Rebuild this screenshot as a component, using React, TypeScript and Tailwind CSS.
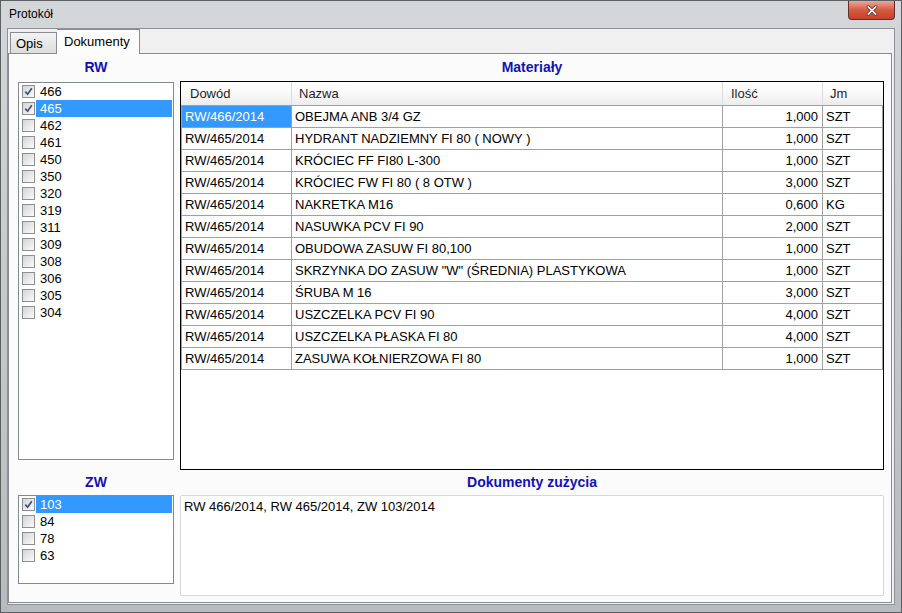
import React from 'react';

const rwItems = ['466', '465', '462', '461', '450', '350', '320', '319', '311', '309', '308', '306', '305', '304'];
const zwItems = ['103', '84', '78', '63'];

const rows = [
  ['RW/466/2014', 'OBEJMA ANB 3/4 GZ', '1,000', 'SZT'],
  ['RW/465/2014', 'HYDRANT NADZIEMNY FI 80 ( NOWY )', '1,000', 'SZT'],
  ['RW/465/2014', 'KRÓCIEC FF FI80 L-300', '1,000', 'SZT'],
  ['RW/465/2014', 'KRÓCIEC FW FI 80 ( 8 OTW )', '3,000', 'SZT'],
  ['RW/465/2014', 'NAKRETKA M16', '0,600', 'KG'],
  ['RW/465/2014', 'NASUWKA PCV FI 90', '2,000', 'SZT'],
  ['RW/465/2014', 'OBUDOWA ZASUW FI 80,100', '1,000', 'SZT'],
  ['RW/465/2014', 'SKRZYNKA DO ZASUW "W" (ŚREDNIA) PLASTYKOWA', '1,000', 'SZT'],
  ['RW/465/2014', 'ŚRUBA M 16', '3,000', 'SZT'],
  ['RW/465/2014', 'USZCZELKA PCV FI 90', '4,000', 'SZT'],
  ['RW/465/2014', 'USZCZELKA PŁASKA FI 80', '4,000', 'SZT'],
  ['RW/465/2014', 'ZASUWA KOŁNIERZOWA FI 80', '1,000', 'SZT'],
];

const CheckBox = ({ checked }: { checked: boolean }) => (
  <span className="flex h-[13px] w-[13px] shrink-0 items-center justify-center border border-[#8f8f8f] bg-[#f4f4f4]">
    <span className="flex h-[11px] w-[11px] items-center justify-center bg-gradient-to-br from-[#d4d4d4] to-[#fbfbfb]">
      {checked && (
        <svg viewBox="0 0 9 9" className="h-[9px] w-[9px]" aria-hidden="true">
          <path d="M1.3 4.6 L3.6 7.2 L7.8 1.2" fill="none" stroke="#3d4f7e" strokeWidth="1.7" />
        </svg>
      )}
    </span>
  </span>
);

const CheckList = ({ items, checked, selected, height }: { items: string[]; checked: string[]; selected: string; height: string }) => (
  <div className={`${height} border border-[#828790] bg-white`}>
    {items.map((it) => (
      <div key={it} className="flex h-[17px] items-center pl-[3px] pr-[1px]">
        <CheckBox checked={checked.includes(it)} />
        <span
          className={`ml-[1px] flex h-[17px] flex-1 items-center pl-[4px] ${
            it === selected ? 'bg-[#3399ff] text-white' : 'text-black'
          }`}
        >
          {it}
        </span>
      </div>
    ))}
  </div>
);

const SectionLabel = ({ children, className }: { children: React.ReactNode; className?: string }) => (
  <div className={`flex items-center justify-center text-[14px] font-bold text-[#1212b2] ${className || ''}`}>
    {children}
  </div>
);

export default function App() {
  return (
    <div className="flex h-[613px] w-[902px] flex-col overflow-hidden border border-[#5c5f63] bg-gradient-to-b from-[#d4d7da] via-[#c6c9cc] to-[#b8bbbe] font-['Liberation_Sans',Arial,sans-serif] text-[13px] text-black">
      {/* title bar */}
      <div className="flex h-[27px] shrink-0 items-start justify-between">
        <div className="pl-[8px] pt-[6px] text-[12px] leading-[15px] text-black">Protokół</div>
        <div className="mr-[6px] flex h-[19px] w-[47px] items-center justify-center rounded-b-[4px] border border-t-0 border-[#6b2b22] bg-gradient-to-b from-[#e9a797] via-[#d45a44] to-[#c5402a]">
          <svg viewBox="0 0 14 12" className="h-[11px] w-[14px]" aria-hidden="true">
            <path d="M3 2 L11 10 M11 2 L3 10" stroke="#5a1d14" strokeWidth="3.4" strokeLinecap="round" />
            <path d="M3 2 L11 10 M11 2 L3 10" stroke="#ffffff" strokeWidth="2" strokeLinecap="round" />
          </svg>
        </div>
      </div>

      {/* client area */}
      <div className="mx-[6px] mb-[7px] flex flex-1 flex-col border border-[#8d9095] bg-[#f0f0f0] pr-[2px] pb-[1px]">
        {/* tabs */}
        <div className="flex h-[24px] items-end pl-[2px]">
          <div className="flex h-[21px] w-[47px] items-center border border-b-0 border-[#898c95] bg-gradient-to-b from-[#f3f3f3] to-[#dddddd] pl-[5px] pt-[2px]">
            Opis
          </div>
          <div className="relative z-10 -mb-[1px] flex h-[25px] w-[83px] items-center border border-b-0 border-l-0 border-[#898c95] bg-[#fcfcfc] pl-[7px]">
            Dokumenty
          </div>
        </div>

        {/* panel */}
        <div className="flex-1 border border-[#898c95] bg-[#fbfbfb] pl-[9px]">
          <div className="grid grid-cols-[156px_704px] gap-x-[6px] gap-y-[5px]">
            <div className="flex flex-col">
              <SectionLabel className="h-[27px]">RW</SectionLabel>
              <div className="mt-[1px]">
                <CheckList items={rwItems} checked={['466', '465']} selected="465" height="h-[378px]" />
              </div>
            </div>
            <div className="flex flex-col">
              <SectionLabel className="h-[27px]">Materiały</SectionLabel>
              <div className="h-[389px] border border-black bg-white">
                <div className="grid h-[24px] grid-cols-[111px_431px_100px_60px] border-b border-[#a0a0a0] bg-gradient-to-b from-[#ffffff] via-[#f9f9f9] to-[#ececec] text-[#1e1e1e]">
                  <div className="flex items-center border-r border-[#dcdcdc] pl-[9px] pt-[1px]">Dowód</div>
                  <div className="flex items-center border-r border-[#dcdcdc] pl-[7px] pt-[1px]">Nazwa</div>
                  <div className="flex items-center border-r border-[#dcdcdc] pl-[8px] pt-[1px]">Ilość</div>
                  <div className="flex items-center pl-[7px] pt-[1px]">Jm</div>
                </div>
                {rows.map((r, i) => (
                  <div key={i} className="grid h-[22px] grid-cols-[111px_431px_100px_60px]">
                    <div className="flex border-b border-l border-r border-[#a0a0a0]">
                      <span className={`flex flex-1 items-center pl-[3px] ${i === 0 ? 'bg-[#3399ff] text-white' : ''}`}>
                        {r[0]}
                      </span>
                    </div>
                    <div className="flex items-center border-b border-r border-[#a0a0a0] pl-[3px]">{r[1]}</div>
                    <div className="flex items-center justify-end border-b border-r border-[#a0a0a0] pr-[4px]">{r[2]}</div>
                    <div className="flex items-center border-b border-r border-[#a0a0a0] pl-[3px]">{r[3]}</div>
                  </div>
                ))}
              </div>
            </div>

            <div className="flex flex-col">
              <SectionLabel className="h-[15px]">ZW</SectionLabel>
              <div className="mt-[5px]">
                <CheckList items={zwItems} checked={['103']} selected="103" height="h-[89px]" />
              </div>
            </div>
            <div className="flex flex-col">
              <SectionLabel className="h-[15px]">Dokumenty zużycia</SectionLabel>
              <div className="mt-[5px] h-[101px] rounded-[2px] border border-[#d5d7dc] bg-white pl-[3px] pt-[3px] leading-[15px]">
                RW 466/2014, RW 465/2014, ZW 103/2014
              </div>
            </div>
          </div>
        </div>
      </div>
    </div>
  );
}
